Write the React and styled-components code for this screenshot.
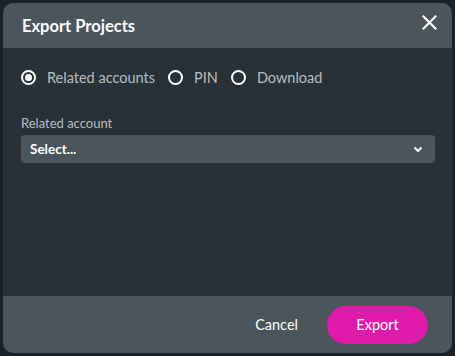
import React, { useState } from "react";
import styled, { createGlobalStyle } from "styled-components";

const Global = createGlobalStyle`
  html, body { margin: 0; padding: 0; background: #1b2125; }
  body { font-family: Lato, "Open Sans", sans-serif; }
  * { box-sizing: border-box; }
`;

const Page = styled.div`
  width: 455px;
  height: 356px;
  padding: 3px;
  background: #1b2125;
`;

const Dialog = styled.div`
  width: 449px;
  height: 350px;
  border-radius: 10px;
  overflow: hidden;
  display: flex;
  flex-direction: column;
  background: #273137;
`;

const Header = styled.div`
  height: 45px;
  background: #4a565c;
  display: flex;
  align-items: center;
  justify-content: space-between;
  padding: 0 14px 0 19px;
`;

const Title = styled.h2`
  margin: 0;
  font-size: 16.5px;
  font-weight: 700;
  color: #ffffff;
  padding-top: 1px;
`;

const CloseBtn = styled.button`
  border: 0;
  background: none;
  padding: 0;
  width: 18px;
  height: 18px;
  margin-top: -6px;
  display: flex;
  align-items: center;
  justify-content: center;
  cursor: pointer;
`;

const Body = styled.div`
  flex: 1;
  padding: 20px 17px 0 18px;
`;

const RadioRow = styled.div`
  display: flex;
  align-items: center;
  gap: 13px;
  height: 18px;
`;

const RadioLabel = styled.label`
  display: flex;
  align-items: center;
  gap: 11px;
  font-size: 14.5px;
  color: #b9bfc3;
  cursor: pointer;
`;

const Circle = styled.span`
  width: 15px;
  height: 15px;
  border-radius: 50%;
  border: 2px solid #ffffff;
  display: flex;
  align-items: center;
  justify-content: center;
  &::after {
    content: "";
    width: 7px;
    height: 7px;
    border-radius: 50%;
    background: #ffffff;
    display: ${(p) => (p.$checked ? "block" : "none")};
  }
`;

const FieldLabel = styled.div`
  margin-top: 29px;
  font-size: 13px;
  color: #b9bfc3;
  line-height: 16px;
`;

const Select = styled.div`
  margin-top: 4px;
  height: 28px;
  background: #4a565c;
  border-radius: 4px;
  display: flex;
  align-items: center;
  justify-content: space-between;
  padding: 0 12px 0 9px;
  font-size: 13.5px;
  font-weight: 700;
  color: #ffffff;
`;

const Footer = styled.div`
  height: 57px;
  background: #4a565c;
  display: flex;
  align-items: center;
  justify-content: flex-end;
  gap: 29px;
  padding: 0 24px 0 0;
`;

const TextButton = styled.button`
  border: 0;
  background: none;
  color: #ffffff;
  font-family: inherit;
  font-size: 14.5px;
  padding: 0;
  cursor: pointer;
`;

const PrimaryButton = styled.button`
  border: 0;
  background: #e01aab;
  color: #ffffff;
  font-family: inherit;
  font-size: 14.5px;
  width: 101px;
  height: 38px;
  border-radius: 19px;
  cursor: pointer;
`;

const options = ["Related accounts", "PIN", "Download"];

export default function App() {
  const [sel, setSel] = useState(0);
  return (
    <Page>
      <Global />
      <Dialog>
        <Header>
          <Title>Export Projects</Title>
          <CloseBtn aria-label="Close">
            <svg width="15" height="15" viewBox="0 0 15 15">
              <path d="M1.5 1.5 L13.5 13.5 M13.5 1.5 L1.5 13.5" stroke="#fff" strokeWidth="2.2" strokeLinecap="square" />
            </svg>
          </CloseBtn>
        </Header>
        <Body>
          <RadioRow>
            {options.map((o, i) => (
              <RadioLabel key={o} onClick={() => setSel(i)}>
                <Circle $checked={sel === i} />
                {o}
              </RadioLabel>
            ))}
          </RadioRow>
          <FieldLabel>Related account</FieldLabel>
          <Select>
            Select...
            <svg width="10" height="7" viewBox="0 0 10 7">
              <path d="M1.5 1.5 L5 5 L8.5 1.5" stroke="#fff" strokeWidth="2" fill="none" />
            </svg>
          </Select>
        </Body>
        <Footer>
          <TextButton>Cancel</TextButton>
          <PrimaryButton>Export</PrimaryButton>
        </Footer>
      </Dialog>
    </Page>
  );
}
